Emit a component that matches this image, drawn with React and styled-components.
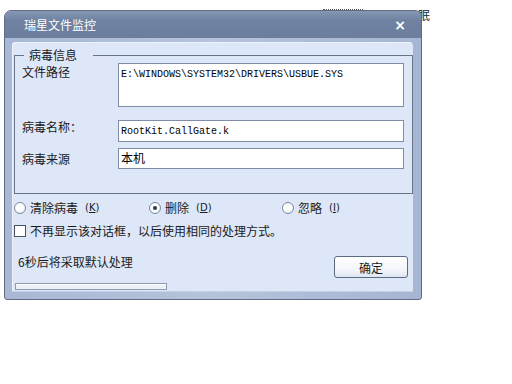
import React from "react";
import styled, { createGlobalStyle } from "styled-components";

const CJK = `"Noto Sans CJK SC", "Noto Sans", sans-serif`;

const GlobalStyle = createGlobalStyle`
  html, body {
    margin: 0;
    background: #ffffff;
  }
  body {
    font-family: ${CJK};
    font-size: 12px;
    color: #1b1b1b;
  }
`;

const Page = styled.div`
  position: relative;
  width: 512px;
  height: 384px;
  padding: 10px 0 0 4px;
  box-sizing: border-box;
`;

// leftovers of the page behind the dialog
const Dots = styled.div`
  position: absolute;
  left: 323px;
  top: 9px;
  width: 40px;
  border-top: 1px dotted #555;
`;

const BehindChar = styled.span`
  position: absolute;
  left: 418px;
  top: 8px;
  font-size: 12px;
  line-height: 14px;
  color: #222;
`;

const Window = styled.div`
  position: relative;
  z-index: 1;
  width: 418px;
  height: 290px;
  box-sizing: border-box;
  display: flex;
  flex-direction: column;
  border: 1px solid #5f6b80;
  border-radius: 7px 7px 3px 3px;
  background: linear-gradient(90deg, #a9b8d4 0%, #b5c3dc 50%, #a6b5d1 100%);
  overflow: hidden;
`;

const TitleBar = styled.div`
  height: 27px;
  flex: none;
  display: flex;
  align-items: center;
  justify-content: space-between;
  padding: 0 15px 0 19px;
  background: linear-gradient(180deg, #8597b4 0%, #6f82a2 35%, #6b7e9e 100%);
  color: #ffffff;
  font-size: 12px;
`;

const Title = styled.span`
  line-height: 14px;
  letter-spacing: 0;
`;

const Close = styled.span`
  font-family: "DejaVu Sans", sans-serif;
  font-size: 14px;
  font-weight: bold;
  line-height: 14px;
  color: #ffffff;
`;

const Client = styled.div`
  flex: 1;
  margin: 4px 8px 7px 7px;
  padding: 7px 0 0 2px;
  display: flex;
  flex-direction: column;
  background: #dde7f7;
  border-radius: 4px 4px 0 0;
  border-bottom: 1px solid #c3cfe4;
  box-shadow: inset 1px 1px 0 #eef3fb;
`;

const Group = styled.fieldset`
  margin: 0;
  padding: 0 7px 24px 7px;
  border: 1px solid #66758c;
  min-width: 0;
`;

const Legend = styled.legend`
  margin-left: 2px;
  padding: 0 16px 0 5px;
  font-size: 12px;
  line-height: 12px;
`;

const Row = styled.div`
  display: flex;
  align-items: ${(p) => p.$align || "flex-start"};
  margin-top: ${(p) => p.$top}px;
`;

const Label = styled.span`
  width: 96px;
  flex: none;
  line-height: 14px;
  padding-top: ${(p) => p.$pad || 0}px;
`;

const Field = styled.div`
  width: 286px;
  height: ${(p) => p.$h}px;
  box-sizing: border-box;
  border: 1px solid #7f8ea6;
  background: #ffffff;
  padding: ${(p) => (p.$cjk ? "2px 2px" : "4px 2px")};
  font-family: ${(p) => (p.$cjk ? CJK : `"Liberation Mono", monospace`)};
  font-size: ${(p) => (p.$cjk ? 12 : 10)}px;
  line-height: 13px;
  color: #000;
  white-space: nowrap;
  overflow: hidden;
`;

const Options = styled.div`
  display: grid;
  grid-template-columns: 135px 133px auto;
  margin-top: 7px;
  height: 14px;
`;

const Option = styled.label`
  display: flex;
  align-items: center;
  gap: 4px;
  line-height: 14px;
`;

const Radio = styled.span`
  width: 12px;
  height: 12px;
  box-sizing: border-box;
  border-radius: 50%;
  border: 1px solid #7b8aa0;
  background: radial-gradient(circle at 40% 35%, #ffffff 40%, #e3e8ef 100%);
  display: flex;
  align-items: center;
  justify-content: center;
  &::after {
    content: "";
    width: 4px;
    height: 4px;
    border-radius: 50%;
    background: ${(p) => (p.$on ? "#2e3a4c" : "transparent")};
  }
`;

const Key = styled.span`
  font-family: "DejaVu Sans", sans-serif;
  font-size: 10px;
  margin-left: 3px;
  u {
    text-decoration: underline;
  }
`;

const CheckRow = styled.label`
  display: flex;
  align-items: center;
  gap: 4px;
  margin-top: 9px;
  line-height: 14px;
`;

const Check = styled.span`
  width: 12px;
  height: 12px;
  box-sizing: border-box;
  border: 1px solid #4a5363;
  background: #ffffff;
`;

const Footer = styled.div`
  display: flex;
  justify-content: space-between;
  align-items: flex-start;
  margin-top: 17px;
  padding: 0 5px 0 4px;
`;

const Countdown = styled.span`
  line-height: 14px;
`;

const Button = styled.button`
  margin-top: 1px;
  width: 74px;
  height: 22px;
  border: 1px solid #5b6b82;
  border-radius: 3px;
  background: linear-gradient(180deg, #ffffff 0%, #f3f6fb 60%, #dfe6f2 100%);
  font-family: ${CJK};
  font-size: 12px;
  color: #1b1b1b;
  padding: 0;
`;

const Progress = styled.div`
  margin: 5px 0 0 1px;
  width: 152px;
  height: 7px;
  box-sizing: border-box;
  border: 1px solid #8d9bb1;
  background: #edf2fa;
  box-shadow: inset 0 1px 0 #ffffff;
`;

export default function App() {
  return (
    <>
      <GlobalStyle />
      <Page>
        <Dots />
        <BehindChar>眠</BehindChar>
        <Window>
          <TitleBar>
            <Title>瑞星文件监控</Title>
            <Close>×</Close>
          </TitleBar>
          <Client>
            <Group>
              <Legend>病毒信息</Legend>
              <Row $top={2}>
                <Label $pad={2}>文件路径</Label>
                <Field $h={44}>E:\WINDOWS\SYSTEM32\DRIVERS\USBUE.SYS</Field>
              </Row>
              <Row $top={13}>
                <Label>病毒名称：</Label>
                <Field $h={22}>RootKit.CallGate.k</Field>
              </Row>
              <Row $top={6} $align="center">
                <Label>病毒来源</Label>
                <Field $h={21} $cjk>
                  本机
                </Field>
              </Row>
            </Group>
            <Options>
              <Option>
                <Radio />
                清除病毒
                <Key>
                  (<u>K</u>)
                </Key>
              </Option>
              <Option>
                <Radio $on />
                删除
                <Key>
                  (<u>D</u>)
                </Key>
              </Option>
              <Option>
                <Radio />
                忽略
                <Key>
                  (<u>I</u>)
                </Key>
              </Option>
            </Options>
            <CheckRow>
              <Check />
              不再显示该对话框，以后使用相同的处理方式。
            </CheckRow>
            <Footer>
              <Countdown>6秒后将采取默认处理</Countdown>
              <Button>确定</Button>
            </Footer>
            <Progress />
          </Client>
        </Window>
      </Page>
    </>
  );
}
